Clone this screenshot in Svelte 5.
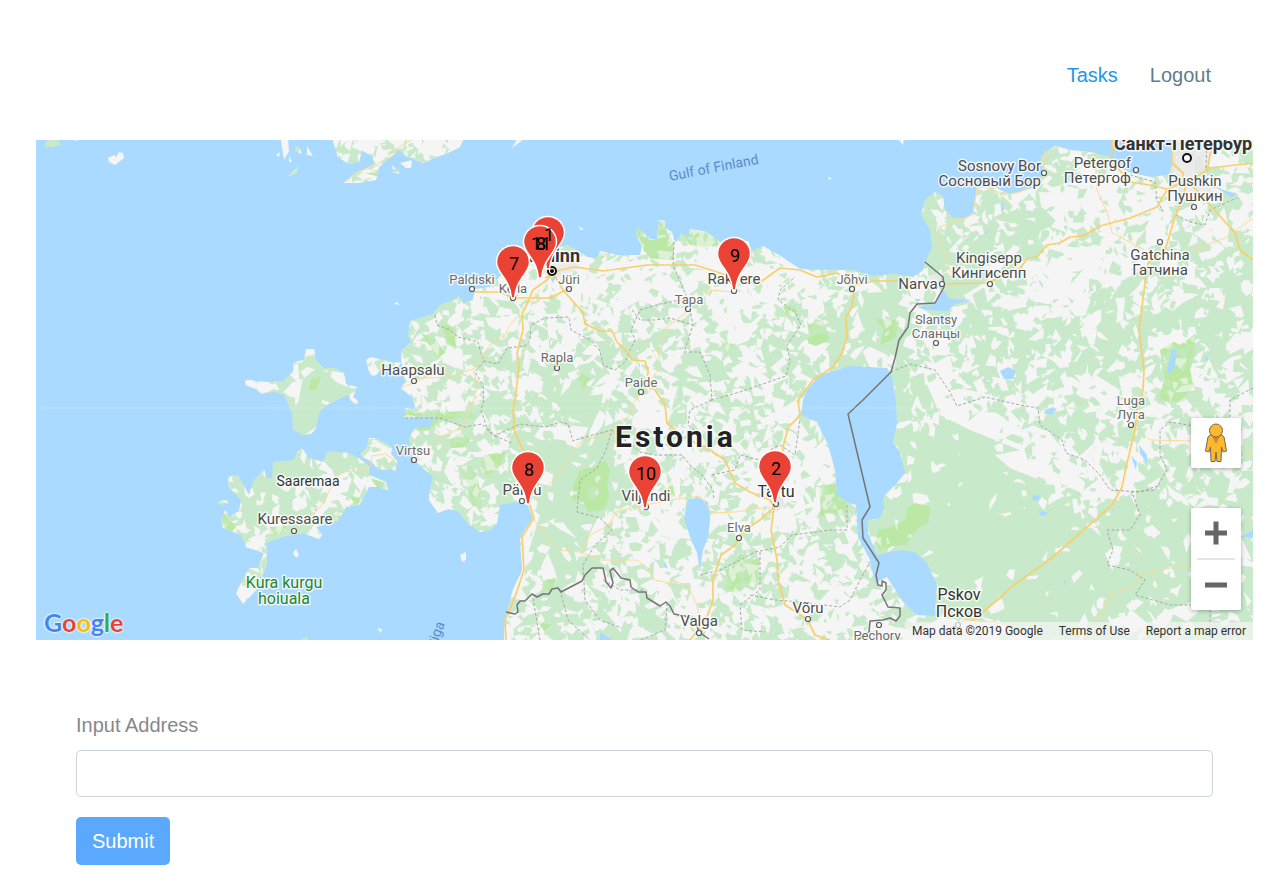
<script>
  let address = $state('');

  const land = [
    // mainland
    'M1260 130 L1172 140 L1172 165 L1168 175 L1150 177 L1131 173 L1112 164 L1110 157 L1090 152 L1070 150 L1055 146 L1045 152 L1041 158 L1043 173 L1036 187 L1020 192 L1010 194 L1000 190 L995 187 L977 187 L973 213 L967 218 L953 218 L945 210 L943 197 L935 192 L925 200 L921 215 L930 230 L932 247 L925 263 L923 270 L913 277 L895 274 L873 276 L853 270 L820 270 L800 269 L782 257 L763 246 L753 251 L748 241 L720 242 L706 232 L690 229 L689 237 L681 234 L675 243 L672 232 L665 228 L665 221 L659 220 L657 240 L650 239 L637 227 L636 234 L642 246 L640 255 L617 255 L600 251 L598 258 L587 257 L577 250 L567 245 L556 248 L547 263 L533 262 L521 267 L506 270 L490 287 L475 289 L473 300 L463 303 L458 296 L451 301 L440 305 L433 314 L410 321 L408 336 L411 342 L402 350 L401 360 L404 373 L405 382 L401 388 L413 398 L416 410 L406 408 L404 418 L436 418 L429 427 L414 429 L409 438 L412 458 L433 477 L430 490 L429 500 L438 513 L448 509 L458 511 L467 523 L480 532 L490 530 L497 523 L500 505 L517 502 L528 505 L533 518 L523 533 L520 540 L522 570 L513 590 L505 620 L504 645 L1260 650 Z',
    // islands
    'M245 382 L247 380 L266 382 L283 381 L293 372 L294 362 L304 360 L305 349 L314 349 L316 360 L324 368 L335 368 L344 373 L346 384 L357 387 L353 397 L358 401 L357 405 L353 404 L348 395 L331 403 L325 406 L319 413 L316 428 L311 434 L303 435 L293 430 L292 413 L284 395 L275 392 L262 394 L256 389 L246 385 Z',
    'M228 477 L238 475 L249 495 L253 482 L263 470 L266 478 L272 478 L273 462 L293 460 L301 447 L309 458 L323 462 L328 451 L349 453 L362 460 L369 467 L369 475 L386 482 L388 490 L379 487 L369 487 L359 505 L346 507 L339 520 L316 527 L322 535 L319 539 L303 533 L283 537 L266 543 L267 563 L259 587 L243 604 L236 593 L249 568 L258 568 L264 553 L246 547 L241 535 L223 528 L221 520 L225 510 L229 517 L239 511 L241 500 L229 487 Z',
    'M361 453 L367 448 L369 438 L376 438 L392 447 L391 454 L397 461 L396 472 L391 469 L379 470 L371 461 L362 457 Z',
    'M366 360 L371 357 L379 359 L389 361 L401 363 L393 372 L380 370 L376 375 L370 376 Z',
    'M332 138 L338 157 L349 164 L359 162 L362 150 L373 157 L373 165 L353 175 L344 183 L359 183 L376 180 L379 167 L399 150 L406 156 L423 163 L437 157 L450 152 L460 147 L464 138 Z',
    'M44 147 L49 138 L57 138 L61 145 L53 147 Z M288 176 L299 166 L296 173 Z M295 146 L299 147 L302 154 L296 152 Z M217 502 L226 500 L229 503 L220 505 Z M300 640 L308 637 L306 642 Z M898 139 L904 139 L903 145 Z M392 172 L400 169 L399 174 Z'
  ].join(' ');

  const islets =
    'M108 158 L114 155 L116 157 L119 152 L123 153 L124 158 L115 165 L109 162 Z M68 138 L76 141 L80 138 Z M281 140 L288 138 L289 151 L284 160 Z M307 146 L313 156 L307 155 Z M276 155 L280 152 L279 157 Z M289 156 L292 162 L289 162 Z ' +
    'M392 165 L396 169 L393 170 Z M400 163 L412 160 L411 168 L406 168 Z M512 148 L517 139 L524 139 Z M579 226 L584 230 L580 230 Z M460 555 L466 552 L466 560 L462 562 Z M293 553 L296 549 L299 555 L296 558 Z M377 628 L382 629 L381 633 Z M394 304 L397 302 L400 305 Z M828 177 L832 178 L829 180 Z M263 475 L264 468 L266 478 Z';

  const lakes =
    'M803 400 L801 415 L817 422 L828 445 L835 470 L837 495 L847 502 L856 505 L858 537 L870 560 L875 583 L887 577 L903 602 L917 615 L935 616 L937 585 L927 563 L915 552 L900 550 L877 555 L868 533 L868 520 L880 518 L884 507 L883 497 L897 483 L905 473 L900 453 L893 442 L897 423 L896 400 L892 377 L887 368 L850 366 L820 375 L808 388 Z ' +
    'M688 500 L698 497 L708 502 L710 520 L708 537 L703 550 L700 570 L697 553 L690 537 L684 518 Z ' +
    'M938 296 L943 290 L950 299 L972 300 L955 304 L948 311 L925 310 L918 307 L935 304 Z M914 299 L921 299 L918 302 Z ' +
    'M1000 371 L1008 367 L1016 371 L1013 379 L1004 379 Z M1172 350 L1177 349 L1174 370 L1168 374 L1167 370 Z M1003 200 L1004 210 L1001 211 Z M985 234 L990 228 L988 233 Z ' +
    'M1045 412 L1052 407 L1057 409 L1050 415 Z M1033 495 L1040 496 L1038 501 L1032 500 Z M1040 511 L1047 512 L1046 516 L1039 515 Z ' +
    'M1139 445 L1147 455 L1147 464 L1140 453 Z M1131 456 L1137 462 L1136 470 Z M1241 537 L1253 530 L1253 537 Z M1204 355 L1209 358 L1207 362 Z M977 377 L989 383 L992 386 Z M1063 583 L1066 579 L1065 585 Z M1217 188 L1236 194 L1232 198 Z M1219 192 L1228 196 L1222 195 Z M550 278 L556 276 L553 283 Z M600 632 L612 640 L600 640 Z M618 342 L624 348 L620 346 Z M665 562 L668 568 L664 567 Z';

  const meadows =
    'M636 228 L650 240 L657 239 L660 221 L666 222 L666 232 L674 243 L674 260 L650 258 L642 247 Z M681 234 L690 229 L706 233 L722 243 L706 247 L690 245 Z ' +
    'M580 470 L592 468 L605 461 L610 470 L607 484 L609 496 L604 509 L588 512 L583 502 L572 500 L574 484 Z M725 570 L733 566 L740 553 L752 560 L760 558 L757 582 L745 584 L737 593 L725 590 L728 580 Z M878 530 L888 528 L905 520 L908 507 L915 503 L930 507 L928 523 L918 528 L905 545 L892 546 L880 553 L876 541 Z ' +
    'M1160 350 L1174 342 L1180 345 L1194 335 L1196 350 L1190 370 L1194 385 L1184 402 L1158 400 L1165 378 Z M808 325 L823 320 L829 340 L816 346 L808 343 Z M875 319 L899 320 L895 338 L880 345 L884 328 Z M820 487 L835 483 L846 500 L845 517 L830 512 L820 517 Z ' +
    'M405 408 L415 413 L470 411 L475 418 L440 420 L429 430 L415 431 L404 418 Z M449 440 L460 433 L470 439 L466 447 L452 448 Z M484 455 L505 452 L500 467 L487 475 L481 470 Z M460 470 L470 466 L478 478 L482 508 L472 505 L468 486 Z M440 320 L458 330 L455 350 L446 340 Z M421 333 L434 338 L446 352 L438 358 Z ' +
    'M311 380 L321 376 L317 389 L309 391 Z M324 405 L338 402 L340 413 L330 416 Z M270 527 L288 526 L280 534 L269 535 Z M370 478 L388 484 L386 491 L377 487 Z M223 513 L229 521 L237 525 L232 532 L222 525 Z M348 495 L360 498 L357 506 Z M328 520 L340 510 L340 520 Z M365 173 L393 172 L385 178 Z M452 292 L460 298 L457 302 Z M521 240 L527 235 L525 245 Z M598 251 L608 254 L600 260 Z M536 620 L552 625 L545 632 Z M720 340 L735 345 L725 352 Z M660 500 L672 482 L675 496 Z M545 580 L556 578 L553 588 L540 596 Z M783 306 L795 305 L797 312 L786 315 Z M575 370 L590 378 L583 390 Z';

  const openLand =
    'M505 272 L548 262 L600 263 L700 270 L735 268 L790 262 L822 276 L860 276 L800 292 L776 300 L760 350 L744 320 L700 300 L660 308 L640 300 L600 310 L560 300 L520 302 L480 296 Z ' +
    'M530 320 L580 325 L575 355 L548 365 L530 345 Z M730 460 L790 430 L830 460 L835 490 L800 540 L760 540 L735 520 L720 490 Z M625 480 L680 470 L680 540 L640 530 Z M640 360 L680 380 L660 450 L640 400 Z ' +
    'M910 278 L940 275 L940 300 L920 305 Z M1030 195 L1090 175 L1180 185 L1165 240 L1130 270 L1070 310 L1030 300 L1025 270 L1075 240 Z M920 330 L945 330 L955 380 L925 385 Z ' +
    'M925 380 L990 395 L1025 420 L1060 440 L1100 465 L1120 500 L1080 495 L1040 480 L1010 468 L995 455 L1020 450 L970 430 L940 415 Z M1080 365 L1120 390 L1110 430 L1090 410 Z M790 580 L870 590 L880 630 L820 640 L785 625 Z M520 500 L540 515 L526 560 L522 600 L510 610 L522 570 Z M940 618 L1000 622 L1000 640 L900 640 Z ' +
    'M378 138 L392 150 L376 160 L380 150 Z M408 138 L445 138 L440 155 L420 161 L403 152 Z M344 373 L348 387 L350 388 L336 382 L324 370 Z M328 470 L350 465 L368 478 L358 500 L330 512 L312 520 L322 490 Z M374 440 L390 448 L388 458 L372 460 Z M248 550 L266 553 L266 570 L260 568 Z';

  const zones = [
    [700, 275, 70, 0.85], [570, 285, 60, 0.8], [790, 275, 55, 0.8], [550, 345, 45, 0.75],
    [770, 480, 75, 0.85], [650, 500, 45, 0.8], [830, 600, 50, 0.75], [650, 620, 70, 0.7],
    [660, 400, 60, 0.7], [560, 535, 50, 0.12], [590, 485, 50, 0.1], [590, 430, 30, 0.25],
    [1120, 230, 70, 0.85], [1050, 290, 45, 0.7], [1000, 215, 40, 0.4], [1220, 210, 50, 0.7],
    [930, 400, 50, 0.5], [1080, 460, 60, 0.75], [1200, 420, 70, 0.6], [1020, 380, 60, 0.55],
    [970, 510, 85, 0.03], [1080, 565, 80, 0.06], [1180, 560, 70, 0.3], [1180, 290, 50, 0.35],
    [950, 470, 50, 0.05], [600, 390, 45, 0.4], [850, 340, 55, 0.25], [420, 150, 50, 0.7],
    [280, 485, 40, 0.05], [315, 390, 50, 0.12], [345, 490, 30, 0.6]
  ];

  function openness(x, y) {
    let total = 0.5;
    let value = (x > 900 ? 0.36 : 0.58) * 0.5;
    for (const [cx, cy, r, w] of zones) {
      const d = ((x - cx) ** 2 + (y - cy) ** 2) / (r * r);
      if (d > 3) continue;
      const k = 3 * Math.exp(-d * 1.6);
      total += k;
      value += w * k;
    }
    return value / total;
  }

  // scatters angular patches of field and forest over the land
  function scatter(seed, step, size, chance) {
    let s = seed;
    const rnd = () => (s = (s * 16807) % 2147483647) / 2147483647;
    let d = '';
    for (let y = 138; y < 645; y += step) {
      for (let x = 222; x < 1258; x += step) {
        const px = x + (rnd() - 0.5) * step * 1.6;
        const py = y + (rnd() - 0.5) * step * 1.6;
        const o = chance(openness(px, py));
        if (rnd() > o) continue;
        const n = 3 + Math.floor(rnd() * 5);
        const tilt = rnd() * Math.PI;
        const stretch = 0.35 + rnd() * 0.5;
        const r = size * (0.5 + rnd() * 0.8) * (0.7 + o * 0.4);
        for (let i = 0; i < n; i++) {
          const a = ((i + rnd() * 0.7) / n) * Math.PI * 2;
          const q = r * (0.3 + rnd() * 0.95);
          const ux = Math.cos(a) * q;
          const uy = Math.sin(a) * q * stretch;
          const vx = px + ux * Math.cos(tilt) - uy * Math.sin(tilt);
          const vy = py + ux * Math.sin(tilt) + uy * Math.cos(tilt);
          d += (i ? 'L' : 'M') + vx.toFixed(1) + ' ' + vy.toFixed(1);
        }
        d += 'Z';
      }
    }
    return d;
  }

  const broadFields = scatter(4217, 16, 18, (o) => o * 1.1);
  const fields = scatter(8191, 12, 10, (o) => o * 1.2);
  const groves = scatter(977, 14, 13, (o) => (o > 0.35 ? 0.6 : 0.1));
  const copses = scatter(5501, 12, 6, (o) => (o > 0.35 ? 0.45 : 0));
  const glades = scatter(3301, 15, 6, (o) => o * 0.6);

  const highways = [
    '545,278 560,270 575,267 603,271 647,265 695,265 720,273 745,283 762,281 780,268 800,270 817,277 837,273 857,285 873,281 900,281',
    '943,284 987,283 1003,276 1020,268 1028,258 1037,257 1047,245 1060,243 1070,237 1083,236 1100,226 1130,218 1157,207 1167,190 1187,180',
    '553,273 563,290 583,313 585,324 600,331 612,331 617,342 628,353 632,360 645,361 648,370 647,385 655,390 665,405 667,423 683,437 707,448 725,460 735,483 750,492 770,500 774,507',
    '553,273 547,280 533,290 522,315 523,330 517,353 519,367 515,400 513,410 515,433 528,460 529,503 534,518 522,537 524,570 515,597 505,620 506,640',
    '475,292 500,292 513,298 550,298 570,288',
    '854,290 852,307 846,317 847,337 842,353 833,367 813,380 798,400 800,415 788,428 783,447 777,500',
    '774,507 760,520 742,532 735,545 721,555 713,580 713,600 705,622 690,640',
    '774,507 771,530 777,560 778,580 785,605 807,619 815,635 830,640',
    '973,620 1000,598 1010,588 1053,557 1112,505 1122,487 1127,463 1135,430 1137,410 1143,390 1144,370 1139,330 1145,283 1148,263 1165,250 1175,217 1183,197 1187,180',
    '1187,180 1210,205 1235,233 1240,250 1253,260',
    '1113,138 1111,160 1130,182 1150,185 1167,189 1187,180',
    '1172,138 1172,163 1183,173 1183,186 1210,168 1253,163',
    '1214,138 1210,155 1207,172'
  ];

  const roads = [
    '401,388 425,378 450,377 475,368 490,345 505,335 510,325 540,290',
    '735,292 707,290 687,312 667,327 658,348 660,367 648,385 634,402 628,418 612,432 580,442 570,455 558,475 535,500',
    '414,460 436,440 462,427 470,410 478,385 473,370',
    '534,520 548,540 560,550 580,552 590,535 610,525 615,512 630,508 645,505 670,500 700,496 712,513 735,512 770,507',
    '580,552 600,560 637,560 650,570 655,580 670,583 675,580 690,590 697,605 700,625',
    '295,530 320,508 330,490 340,472 358,471 370,466 372,456 385,454 395,460',
    '347,182 355,173 378,165 399,147 415,138',
    '977,187 973,215 953,222 937,228 940,240 947,262 952,275',
    '977,187 990,188 1003,195 1020,192 1043,178 1045,152',
    '1095,152 1097,190 1108,215 1112,233 1145,250',
    '1180,255 1225,238 1253,218',
    '1135,427 1150,440 1192,441 1230,450 1253,453',
    '1253,514 1235,535 1205,560 1140,575 1133,587 1110,593 1105,610 1095,620',
    '930,640 965,620 990,622 1010,625'
  ];

  const districts = [
    '435,315 437,325 450,330 458,337 478,342 481,353 484,361 498,364 507,348 525,346 530,340 531,325 545,318 569,317 571,330 590,340 600,351 603,365 615,370 625,362 630,350 635,340 631,330 640,310 660,304 690,298',
    '484,361 475,372 483,385 484,400 481,410 487,428 495,436 512,443',
    '405,418 440,418 465,427 482,424 494,436 520,424 545,427 560,422 568,424 573,441 585,437 612,430 606,450 597,468 580,480 577,512 600,518 612,530 595,545 583,565 585,600 600,620 622,628',
    '674,242 673,265 688,300 693,325 684,352 700,352 710,375 712,400 740,392 786,376 790,360 787,345 801,325 795,312 778,300 780,290 795,277',
    '632,310 640,320 655,320 670,318 693,325',
    '612,430 640,452 655,455 682,455 690,465 702,475 713,490 714,500',
    '712,400 690,410 688,425 700,435',
    '712,475 735,470 740,455 760,460 770,450 780,445 795,455 800,420',
    '700,575 720,570 740,560 755,552 780,547 792,535 830,530 847,530 847,505',
    '760,552 760,590 740,605 742,630 765,632',
    '533,598 540,640', '560,590 568,620 590,640', '603,580 620,590 645,590', '750,595 775,600 800,602 840,607 850,600 860,580 870,562',
    '667,603 665,630 640,640', '891,372 910,364 935,370 950,392 957,406 985,397 1020,405 1038,408 1040,425 1062,440 1066,453 1085,460 1100,475 1110,490 1140,492 1160,485',
    '1253,388 1230,400 1230,425 1200,427 1170,422 1160,430 1160,455 1167,470 1155,490 1132,492 1140,515 1130,530 1107,530 1113,550 1107,565 1130,570 1145,580 1135,595 1170,605 1210,605 1210,640',
    '1130,175 1155,182 1157,200 1163,212', '1176,215 1190,222 1205,225 1210,210 1237,198', '1207,140 1206,170'
  ];

  const frontier = [
    '925,262 943,277 944,287 935,303 917,304 910,313 908,327 899,340 895,358 891,372 863,400 848,414 870,507 862,520 863,538 879,563 876,575 878,585 882,586 882,581 886,583 886,590 882,595 885,601 888,607 900,608 900,616 896,621 890,618 883,620 870,621 869,632 857,640',
    '506,612 515,614 518,612 517,605 520,601 525,601 532,594 537,597 543,594 549,594 552,589 558,588 561,592 582,581 585,575 592,568 603,568 604,572 606,582 611,588 613,583 610,571 613,568 621,578 630,580 631,587 638,592 646,592 647,598 660,606 666,602 670,606 674,614 685,616 695,620 699,632 709,639'
  ];

  const labels = [
    { x: 472, y: 284, t: ['Paldiski'], c: 'minor', dot: [472, 289] },
    { x: 513, y: 293, t: ['Keila'], c: 'minor', dot: [513, 298] },
    { x: 569, y: 284, t: ['Jüri'], c: 'minor', dot: [569, 289] },
    { x: 734, y: 284, t: ['Rakvere'], c: 'town', dot: [734, 291] },
    { x: 689, y: 304, t: ['Tapa'], c: 'minor', dot: [688, 309] },
    { x: 557, y: 362, t: ['Rapla'], c: 'minor', dot: [557, 368] },
    { x: 641, y: 387, t: ['Paide'], c: 'minor', dot: [641, 392] },
    { x: 852, y: 284, t: ['Jõhvi'], c: 'minor', dot: [852, 289] },
    { x: 918, y: 289, t: ['Narva'], c: 'town', dot: [942, 284] },
    { x: 413, y: 375, t: ['Haapsalu'], c: 'town', dot: [414, 381] },
    { x: 413, y: 455, t: ['Virtsu'], c: 'minor', dot: [414, 460] },
    { x: 308, y: 486, t: ['Saaremaa'], c: 'region' },
    { x: 295, y: 524, t: ['Kuressaare'], c: 'town', dot: [294, 531] },
    { x: 284, y: 588, t: ['Kura kurgu', 'hoiuala'], c: 'park', lh: 16 },
    { x: 522, y: 495, t: ['Pärnu'], c: 'town', dot: [522, 501] },
    { x: 646, y: 501, t: ['Viljandi'], c: 'town', dot: [646, 507] },
    { x: 776, y: 497, t: ['Tartu'], c: 'city', dot: [776, 504] },
    { x: 739, y: 532, t: ['Elva'], c: 'minor', dot: [739, 538] },
    { x: 808, y: 613, t: ['Võru'], c: 'town', dot: [808, 619] },
    { x: 699, y: 626, t: ['Valga'], c: 'town', dot: [699, 633] },
    { x: 877, y: 640, t: ['Pechory'], c: 'minor', dot: [879, 625] },
    { x: 959, y: 600, t: ['Pskov', 'Псков'], c: 'city', lh: 17, dot: [958, 625] },
    { x: 1131, y: 405, t: ['Luga', 'Луга'], c: 'minor', lh: 14, dot: [1131, 425] },
    { x: 936, y: 324, t: ['Slantsy', 'Сланцы'], c: 'minor', lh: 14, dot: [936, 343] },
    { x: 989, y: 263, t: ['Kingisepp', 'Кингисепп'], c: 'town', lh: 15, dot: [990, 284] },
    { x: 1160, y: 260, t: ['Gatchina', 'Гатчина'], c: 'town', lh: 15, dot: [1160, 242] },
    { x: 1195, y: 186, t: ['Pushkin', 'Пушкин'], c: 'town', lh: 15, dot: [1194, 207] },
    { x: 1041, y: 171, t: ['Sosnovy Bor', 'Сосновый Бор'], c: 'town', lh: 15, dot: [1044, 173], end: true },
    { x: 1131, y: 168, t: ['Petergof', 'Петергоф'], c: 'town', lh: 15, dot: [1136, 170], end: true }
  ];

  const pins = [
    { x: 548, y: 233, n: ['1'] },
    { x: 540, y: 242, n: ['3', '8', '11'] },
    { x: 513, y: 262, n: ['7'] },
    { x: 734, y: 254, n: ['9'] },
    { x: 528, y: 468, n: ['8'] },
    { x: 645, y: 472, n: ['10'] },
    { x: 775, y: 467, n: ['2'] }
  ];
</script>

<div class="page">
  <nav>
    <a class="active" href="#tasks">Tasks</a>
    <a href="#logout">Logout</a>
  </nav>

  <section class="map" aria-label="Map">
    <svg class="canvas" viewBox="36 140 1217 500" preserveAspectRatio="xMidYMid slice">
      <defs>
        <clipPath id="land"><path d={land} /></clipPath>
      </defs>
      <path class="forest" d={land} />
      <g clip-path="url(#land)">
        <path class="field" d={openLand} />
        <path class="field" d={broadFields} />
        <path class="meadow" d={meadows} />
        <path class="forest" d={groves} />
        <path class="field" d={fields} />
        <path class="forest" d={copses} />
        <path class="field" d={glades} />
        <path class="meadow soft" d={meadows} />
        <path class="urban" d="M1170 138 L1215 138 L1205 170 L1215 195 L1185 200 L1172 180 Z M530 264 L556 248 L575 255 L580 268 L555 280 Z M928 276 L940 272 L942 284 L930 295 Z M770 500 L782 498 L786 505 L775 513 Z" />
      </g>
      <path class="field" d={islets} />
      <path class="water" d={lakes} />
      {#each districts as points}<polyline class="district" {points} />{/each}
      {#each roads as points}<polyline class="road" {points} />{/each}
      {#each highways as points}<polyline class="highway" {points} />{/each}
      {#each frontier as points}<polyline class="frontier" {points} />{/each}
      <path class="seam" d="M36 408 H1253" />

      {#each labels as l}
        {#if l.dot}<circle class="dot" cx={l.dot[0]} cy={l.dot[1]} r="2.5" />{/if}
        <text class={l.c} x={l.x} y={l.y} text-anchor={l.end ? 'end' : 'middle'}>
          {#each l.t as line, i}<tspan x={l.x} dy={i ? l.lh : 0}>{line}</tspan>{/each}
        </text>
      {/each}
      <circle class="dot big" cx="1187" cy="158" r="4" />
      <text class="metro" x="1114" y="150">Санкт-Петербург</text>
      <text class="metro" x="580" y="262" text-anchor="end">Tallinn</text>
      <circle class="dot big" cx="552" cy="271" r="4" />
      <circle cx="552" cy="271" r="2" />
      <text class="country" x="615" y="447">Estonia</text>
      <text class="sea" transform="translate(670 181) rotate(-11)">Gulf of Finland</text>
      <text class="sea" transform="translate(420 692) rotate(-70)">Gulf of Riga</text>

      {#each pins as p}
        <path class="pin" transform="translate({p.x} {p.y})" d="M0 -16.5 A16.5 16.5 0 0 1 16.5 0 C16.5 6 13 10 9.5 15 C5.5 21 2.5 26 1.5 36 L-1.5 36 C-2.5 26 -5.5 21 -9.5 15 C-13 10 -16.5 6 -16.5 0 A16.5 16.5 0 0 1 0 -16.5 Z" />
      {/each}
      {#each pins as p}
        {#each p.n as n}<text class="number" x={p.x + 1} y={p.y + 8} text-anchor="middle">{n}</text>{/each}
      {/each}
    </svg>

    <a class="logo" href="#google" aria-label="Google"><span class="b">G</span><span class="r">o</span><span class="y">o</span><span class="b">g</span><span class="g">l</span><span class="r">e</span></a>

    <div class="controls">
      <button class="pegman" aria-label="Street View">
        <svg width="24" height="40" viewBox="0 0 24 40">
          <path d="M6 12 H18 L20 14 L22.500 28 L19 29 L17.500 24 L17 38.500 H13 L12 29 L11 38.500 H7 L6.500 24 L5 29 L1.500 28 L4 14 Z" fill="#fbb92b" stroke="#6e6a5c" stroke-linejoin="round" />
          <path d="M8 13 H16 L12 21 Z" fill="#e0812d" />
          <circle cx="12" cy="7.500" r="6.500" fill="#fbb92b" stroke="#6e6a5c" />
        </svg>
      </button>
      <div class="zoom">
        <button aria-label="Zoom in">
          <svg width="24" height="24" viewBox="0 0 24 24"><path d="M9.500 0.500 h5 v9 h8.500 v5 h-8.500 v9 h-5 v-9 h-8.500 v-5 h8.500 Z" /></svg>
        </button>
        <button aria-label="Zoom out">
          <svg width="24" height="24" viewBox="0 0 24 24"><path d="M1 9.500 h22 v5 h-22 Z" /></svg>
        </button>
      </div>
    </div>

    <div class="credits">
      <span>Map data ©2019 Google</span>
      <a href="#terms">Terms of Use</a>
      <a href="#report">Report a map error</a>
    </div>
  </section>

  <form onsubmit={(e) => e.preventDefault()}>
    <label for="address">Input Address</label>
    <input id="address" type="text" bind:value={address} />
    <button type="submit">Submit</button>
  </form>
</div>

<style>
  :global(body) {
    margin: 0;
    background: #fff;
  }
  .page {
    box-sizing: border-box;
    padding: 60px 34px 19px 36px;
    font: 20px/30px 'Liberation Sans', Arial, sans-serif;
  }
  nav {
    display: flex;
    justify-content: flex-end;
    gap: 32px;
    padding: 0 42px 50px 0;
  }
  nav a {
    color: #607d8b;
    text-decoration: none;
  }
  nav a.active {
    color: #1e96ea;
  }
  .map {
    position: relative;
    height: 500px;
    overflow: hidden;
    background: #aadaff;
    font-family: Roboto, Arial, sans-serif;
  }
  .canvas {
    display: block;
    width: 100%;
    height: 100%;
  }
  .forest { fill: #c8e9ca; }
  .field { fill: #f5f5f5; }
  .meadow { fill: #bbe9a5; }
  .soft { opacity: 0.4; }
  .urban { fill: #e9e9e9; opacity: 0.8; }
  .water { fill: #aadaff; }
  polyline {
    fill: none;
    stroke-linejoin: round;
  }
  .district {
    stroke: #a3aaa6;
    stroke-dasharray: 3 2;
  }
  .road {
    stroke: #fbdc95;
  }
  .highway {
    stroke: #f9cf6a;
    stroke-width: 1.7;
  }
  .frontier {
    stroke: #757575;
    stroke-width: 1.5;
  }
  .seam {
    stroke: #fff;
    opacity: 0.25;
  }
  .dot {
    fill: #fff;
    stroke: #555;
    stroke-width: 1.2;
  }
  .big {
    stroke: #111;
    stroke-width: 2;
  }
  .canvas text {
    paint-order: stroke;
    stroke: #fff;
    stroke-opacity: 0.8;
    stroke-width: 3px;
    stroke-linejoin: round;
    font-size: 15px;
    fill: #4d4d4d;
  }
  .canvas text.minor {
    font-size: 13px;
    fill: #6b6b6b;
  }
  .canvas text.region {
    font-size: 14px;
    fill: #333;
  }
  .canvas text.city {
    font-size: 16px;
    fill: #333;
  }
  .canvas text.park {
    font-size: 16px;
    fill: #26862b;
  }
  .canvas text.metro {
    font-size: 18px;
    font-weight: 700;
    fill: #333;
  }
  .canvas text.country {
    font-size: 30px;
    font-weight: 700;
    letter-spacing: 3px;
    fill: #222;
  }
  .canvas text.sea {
    stroke: none;
    font-size: 14px;
    fill: #5b8ac9;
  }
  .canvas text.number {
    stroke: none;
    font-size: 18px;
    fill: #000;
  }
  .pin {
    fill: #ea4335;
    stroke: #fff;
    stroke-width: 1.5;
  }
  .logo {
    position: absolute;
    left: 8px;
    bottom: 3px;
    font: 700 25px/30px Lato, sans-serif;
    text-decoration: none;
    text-shadow: 0 0 2px #fff, 0 0 2px #fff, 0 0 2px #fff;
  }
  .b { color: #4285f4; }
  .r { color: #ea4335; }
  .y { color: #fbbc05; }
  .g { color: #34a853; }
  .controls {
    position: absolute;
    right: 12px;
    bottom: 30px;
    display: grid;
    gap: 40px;
  }
  .controls button {
    display: grid;
    place-items: center;
    width: 50px;
    height: 50px;
    padding: 0;
    border: 0;
    background: #fff;
  }
  .controls .pegman,
  .zoom {
    border-radius: 2px;
    background: #fff;
    box-shadow: 0 1px 4px rgba(0, 0, 0, 0.3);
  }
  .zoom {
    display: grid;
    gap: 2px;
  }
  .zoom path {
    fill: #666;
  }
  .zoom button {
    border-radius: 2px;
  }
  .zoom button + button::before {
    content: '';
    position: absolute;
    bottom: 50px;
    width: 38px;
    height: 2px;
    background: #e6e6e6;
  }
  .credits {
    position: absolute;
    right: 0;
    bottom: 0;
    display: flex;
    gap: 16px;
    padding: 0 7px;
    background: rgba(245, 245, 245, 0.7);
    font-size: 12px;
    line-height: 18px;
    white-space: nowrap;
    color: #333;
  }
  .credits a {
    color: #333;
    text-decoration: none;
  }
  form {
    display: grid;
    justify-items: start;
    padding: 70px 40px 0;
  }
  label {
    margin-bottom: 10px;
    color: #888;
  }
  input {
    box-sizing: border-box;
    width: 100%;
    height: 47px;
    padding: 8px 12px;
    border: 1px solid #ced4da;
    border-radius: 5px;
    background: #fff;
    font: inherit;
    color: #495057;
  }
  form button {
    height: 48px;
    margin-top: 20px;
    padding: 0 16px;
    border: 0;
    border-radius: 5px;
    background: #5aa9ff;
    font: inherit;
    color: #fff;
  }
</style>
